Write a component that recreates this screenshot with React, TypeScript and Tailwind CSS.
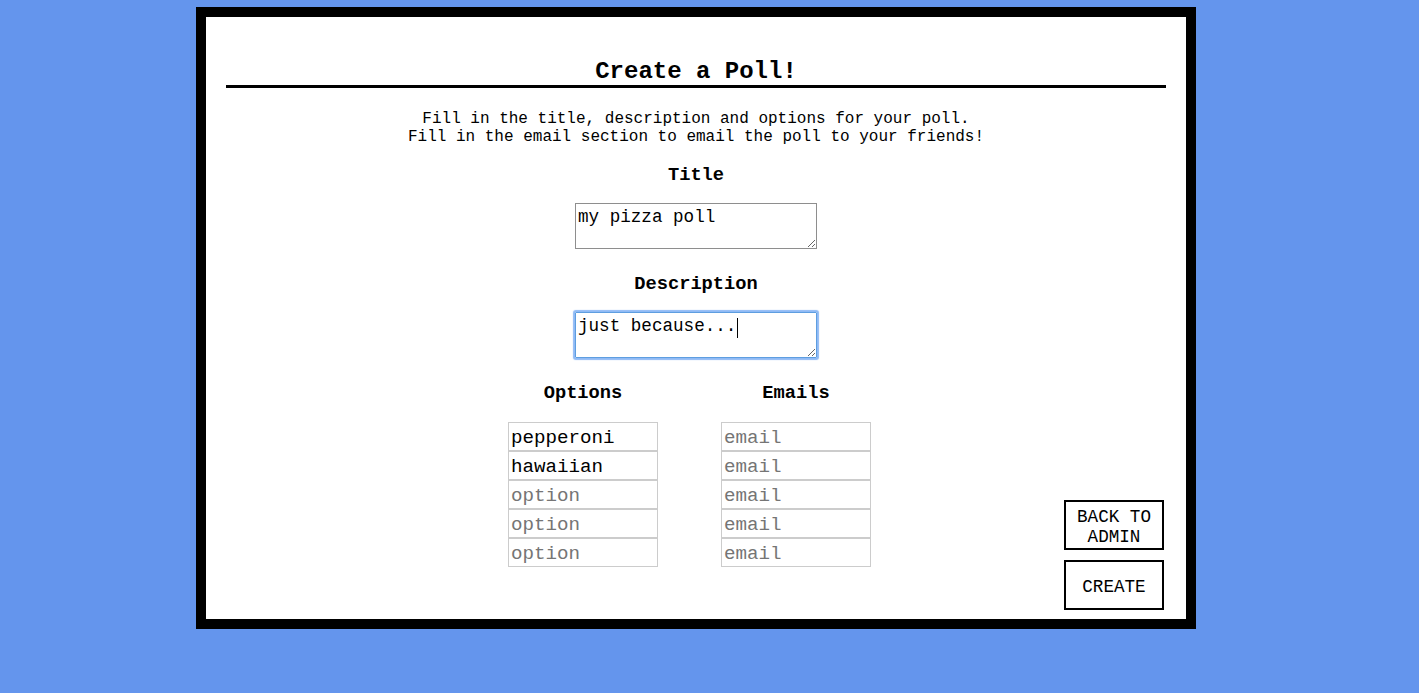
import React from "react";

const options = ["pepperoni", "hawaiian", "", "", ""];
const emails = ["", "", "", "", ""];

export default function App() {
  return (
    <div className="min-h-screen bg-[#6495ed] pt-[7px] text-black font-['Liberation_Mono','Courier_New',monospace]">
      <div className="ml-[196px] w-[1000px] h-[622px] border-[10px] border-black bg-white flex flex-col px-[20px] pb-[9px]">
        <h2 className="mt-[40px] pt-[2px] text-[24px] font-bold text-center leading-[26px] border-b-[3px] border-black">
          Create a Poll!
        </h2>
        <p className="mt-[22px] text-[16px] leading-[18px] text-center">
          Fill in the title, description and options for your poll.
          <br />
          Fill in the email section to email the poll to your friends!
        </p>
        <div className="flex-1 grid grid-cols-[1fr_auto_1fr]">
          <div />
          <div className="flex flex-col items-center">
            <h3 className="mt-[20px] text-[18.72px] font-bold leading-[18px]">Title</h3>
            <textarea
              className="mt-[19px] w-[242px] h-[46px] border border-[#8e8e8e] px-[2px] pt-[3px] pb-[1px] text-[17.6px] leading-[20px] outline-none"
              defaultValue="my pizza poll"
            />
            <h3 className="mt-[26px] text-[18.72px] font-bold leading-[18px]">Description</h3>
            <div className="relative mt-[19px]">
              <textarea
                className="block w-[242px] h-[46px] border border-[#5e9ee0] rounded-[1px] px-[2px] pt-[3px] pb-[1px] text-[17.6px] leading-[20px] outline-none shadow-[0_0_1px_2px_#8fbaf5]"
                defaultValue="just because..."
              />
              <div className="absolute left-[162px] top-[6px] w-[1px] h-[20px] bg-black" />
            </div>
            <div className="mt-[26px] flex gap-[63px] mr-[13px]">
              <div className="flex flex-col items-center">
                <h3 className="text-[18.72px] font-bold leading-[18px]">Options</h3>
                <div className="mt-[20px] flex flex-col">
                  {options.map((v, i) => (
                    <input
                      key={i}
                      className="w-[150px] h-[29px] border border-[#cccccc] px-[2px] pt-[2px] pb-0 text-[19.2px] outline-none placeholder:text-[#757575]"
                      placeholder="option"
                      defaultValue={v}
                    />
                  ))}
                </div>
              </div>
              <div className="flex flex-col items-center">
                <h3 className="text-[18.72px] font-bold leading-[18px]">Emails</h3>
                <div className="mt-[20px] flex flex-col">
                  {emails.map((v, i) => (
                    <input
                      key={i}
                      className="w-[150px] h-[29px] border border-[#cccccc] px-[2px] pt-[2px] pb-0 text-[19.2px] outline-none placeholder:text-[#757575]"
                      placeholder="email"
                      defaultValue={v}
                    />
                  ))}
                </div>
              </div>
            </div>
          </div>
          <div className="flex flex-col justify-end items-end gap-[10px] pr-[2px]">
            <button className="w-[100px] h-[50px] border-2 border-black bg-white pt-[4px] text-[17.6px] leading-[20px] text-center">
              BACK TO
              <br />
              ADMIN
            </button>
            <button className="w-[100px] h-[50px] border-2 border-black bg-white pt-[4px] text-[17.6px] leading-[20px] text-center">
              CREATE
            </button>
          </div>
        </div>
      </div>
    </div>
  );
}
